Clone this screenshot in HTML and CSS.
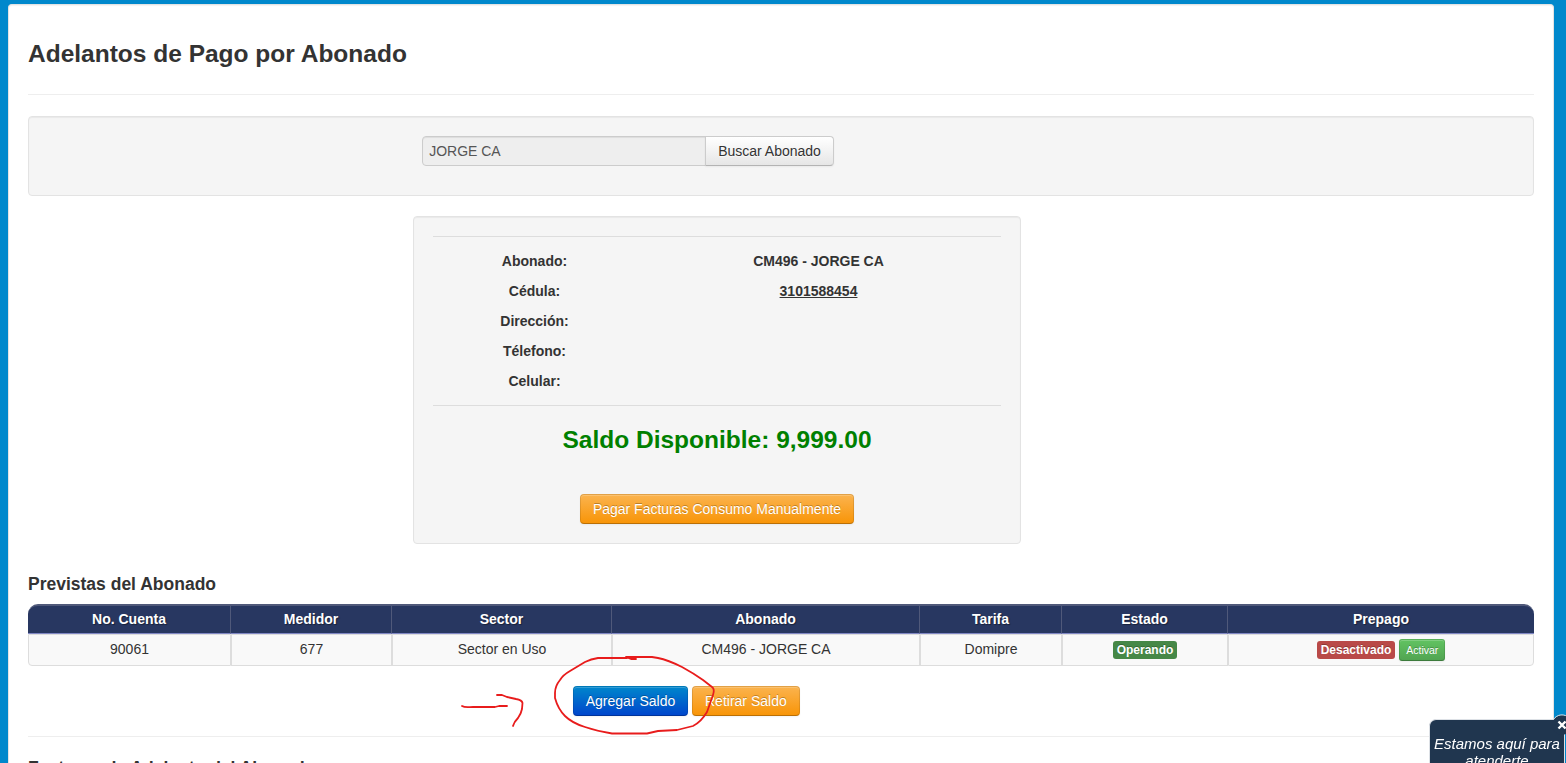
FILE: index.html
```html
<!DOCTYPE html>
<html lang="es">
<head>
    <meta charset="UTF-8">
    <meta name="viewport" content="width=device-width, initial-scale=1.0">
    <title>Adelantos de Pago por Abonado</title>
    <link rel="stylesheet" href="styles.css">
</head>
<body>
    <div class="page">
        <h3>Adelantos de Pago por Abonado</h3>
        <hr>

        <div class="well search">
            <input type="text" value="JORGE CA" readonly>
            <button class="btn btn-search">Buscar Abonado</button>
        </div>

        <div class="well account">
            <div class="details">
                <span>Abonado:</span><span>CM496 - JORGE CA</span>
                <span>Cédula:</span><span><u>3101588454</u></span>
                <span>Dirección:</span><span></span>
                <span>Télefono:</span><span></span>
                <span>Celular:</span><span></span>
            </div>
            <h3 class="balance">Saldo Disponible: 9,999.00</h3>
            <button class="btn btn-warning">Pagar Facturas Consumo Manualmente</button>
        </div>

        <h4 class="table-title">Previstas del Abonado</h4>
        <table class="table">
            <colgroup>
                <col class="col-account"><col class="col-meter"><col class="col-sector"><col class="col-name">
                <col class="col-rate"><col class="col-state"><col class="col-prepaid">
            </colgroup>
            <thead>
                <tr>
                    <th>No. Cuenta</th>
                    <th>Medidor</th>
                    <th>Sector</th>
                    <th>Abonado</th>
                    <th>Tarifa</th>
                    <th>Estado</th>
                    <th>Prepago</th>
                </tr>
            </thead>
            <tbody>
                <tr>
                    <td>90061</td>
                    <td>677</td>
                    <td>Sector en Uso</td>
                    <td>CM496 - JORGE CA</td>
                    <td>Domipre</td>
                    <td><span class="label label-success">Operando</span></td>
                    <td><span class="label label-important">Desactivado</span> <button class="btn btn-mini btn-success">Activar</button></td>
                </tr>
            </tbody>
        </table>

        <div class="actions">
            <button class="btn btn-primary">Agregar Saldo</button>
            <button class="btn btn-warning">Retirar Saldo</button>
            <svg class="marks" width="270" height="90" viewBox="0 0 270 90">
                <path d="M7 56 C10 58 14 57 18 57 L40 57 L44 56 L52 56"/>
                <path d="M42 45 L47 45 L52 47 L61 49 Q67 50 67.500 53 L67 59 Q66 64 63 68 Q59 72 58 76"/>
                <path d="M172 8 L143 8 Q136 9 130 12 L115 21 Q108 25 105 30 Q100 36 100 43 V48 Q103 59 110 66 Q117 73 130 77 Q142 81 157 83.500 H192 L203 81 L222 80 L238 76 Q246 72 252 62 L258 45 Q260 39 257 37 L248 30 Q238 23 227 17 Q213 10 203 8 L197 7 H171 L176 9 H181"/>
            </svg>
        </div>
        <hr>
        <h4>Facturas de Adelanto del Abonado</h4>
    </div>

    <div class="chat">
        <svg class="chat-close" width="22" height="22" viewBox="0 0 22 22">
            <circle cx="11" cy="11" r="10"/>
            <path class="ring" d="M2.500 5.500A10 10 0 1 1 16 19.500"/>
            <path class="cross" d="M7.500 7.500l7 7M14.500 7.500l-7 7"/>
        </svg>
        <p>Estamos aquí para atenderte</p>
    </div>
</body>
</html>
```
FILE: styles.css
```css
* {
    box-sizing: border-box;
}

body {
    margin: 0;
    height: 763px;
    padding: 4px 12px 0 8px;
    overflow: hidden;
    background: #0088cc;
    color: #333;
    font-family: "Liberation Sans", Arial, sans-serif;
    font-size: 14px;
    line-height: 20px;
}

.page {
    height: 759px;
    overflow: hidden;
    padding: 19px 19px 0;
    background: #fff;
    border: 1px solid #e3e3e3;
    border-bottom: 0;
    border-radius: 4px 4px 0 0;
    box-shadow: inset 0 1px 1px rgba(0,0,0,0.05);
}

h3 {
    margin: 10px 0;
    font-size: 24.5px;
    line-height: 40px;
}

h4 {
    margin: 10px 0;
    font-size: 17.5px;
    line-height: 20px;
}

hr {
    margin: 20px 0;
    border: 0;
    border-top: 1px solid #eee;
    border-bottom: 1px solid #fff;
}

.well {
    margin-bottom: 20px;
    padding: 19px;
    background: #f5f5f5;
    border: 1px solid #e3e3e3;
    border-radius: 4px;
    box-shadow: inset 0 1px 1px rgba(0,0,0,0.05);
}

.search {
    display: flex;
    justify-content: center;
    height: 80px;
    padding-right: 325px;
}

input {
    width: 284px;
    height: 30px;
    padding: 4px 6px;
    background: #eee;
    border: 1px solid #ccc;
    border-radius: 4px 0 0 4px;
    box-shadow: inset 0 1px 1px rgba(0,0,0,0.075);
    color: #555;
    font: 14px/20px "Liberation Sans", Arial, sans-serif;
}

.btn {
    height: 30px;
    padding: 4px 12px;
    border: 1px solid #ccc;
    border-color: rgba(0,0,0,0.1) rgba(0,0,0,0.1) rgba(0,0,0,0.25);
    border-radius: 4px;
    box-shadow: inset 0 1px 0 rgba(255,255,255,0.2), 0 1px 2px rgba(0,0,0,0.05);
    color: #fff;
    font: 14px/20px "Liberation Sans", Arial, sans-serif;
    text-shadow: 0 -1px 0 rgba(0,0,0,0.25);
    white-space: nowrap;
}

.btn-search {
    margin-left: -1px;
    background: linear-gradient(#fff, #e6e6e6);
    border-color: #ccc #ccc #b3b3b3;
    border-radius: 0 4px 4px 0;
    color: #333;
    text-shadow: 0 1px 1px rgba(255,255,255,0.75);
}

.btn-primary {
    width: 115px;
    padding: 4px 0;
    background: linear-gradient(#0088cc, #0044cc) border-box;
}

.btn-warning {
    background: linear-gradient(#fbb450, #f89406) border-box;
}

.btn-success {
    background: linear-gradient(#62c462, #51a351) border-box;
}

.btn-mini {
    height: 22px;
    padding: 0 6px;
    border-radius: 3px;
    font-size: 10.5px;
    vertical-align: middle;
}

.account {
    width: 608px;
    height: 328px;
    margin-left: 385px;
    text-align: center;
}

.details {
    display: grid;
    grid-template-columns: 203px 1fr;
    grid-auto-rows: 30px;
    height: 170px;
    padding-top: 9px;
    border-top: 1px solid #ddd;
    border-bottom: 1px solid #ddd;
    font-weight: bold;
    line-height: 30px;
}

.balance {
    margin: 14px 0 34px;
    color: green;
}

.table-title {
    margin-top: 30px;
}

.table {
    width: 100%;
    table-layout: fixed;
    border-collapse: separate;
    border-spacing: 0;
    text-align: center;
}

.col-account { width: 203px; }
.col-meter { width: 161px; }
.col-sector { width: 220px; }
.col-name { width: 308px; }
.col-rate { width: 142px; }
.col-state { width: 166px; }
.col-prepaid { width: 306px; }

th {
    height: 30px;
    padding: 3px 4px 4px;
    background: #283761;
    border-top: 2px solid #50597a;
    border-right: 1px solid #50597a;
    border-bottom: 1px solid #8087c4;
    color: #fff;
    text-shadow: 1px 1px 1px rgba(0,0,0,0.4);
}

th:first-child {
    border-top-left-radius: 10px;
}

th:last-child {
    border-right: 0;
    border-top-right-radius: 10px;
}

td {
    height: 32px;
    padding: 4px;
    background: #f9f9f9;
    border: 1px solid #ddd;
    vertical-align: top;
    line-height: 20px;
}

td:first-child {
    border-bottom-left-radius: 4px;
}

td:last-child {
    border-bottom-right-radius: 4px;
}

.label {
    display: inline-block;
    height: 18px;
    padding: 2px 4px;
    border-radius: 3px;
    color: #fff;
    font-size: 12px;
    font-weight: bold;
    line-height: 14px;
    text-shadow: 0 -1px 0 rgba(0,0,0,0.25);
    vertical-align: middle;
}

.label-success {
    background: #468847;
}

.label-important {
    background: #b94a48;
}

.actions {
    position: relative;
    display: flex;
    gap: 4px;
    margin: 20px 0;
    padding-left: 545px;
}

/* hand-drawn arrow and circle over the buttons */
.marks {
    position: absolute;
    top: -36px;
    left: 427px;
    fill: none;
    stroke: #e81c1c;
    stroke-width: 1.8;
    stroke-linecap: round;
    stroke-linejoin: round;
    pointer-events: none;
}

.chat {
    position: fixed;
    top: 719px;
    left: 1429px;
    width: 136px;
    height: 44px;
    padding: 15px 2px 0;
    background: #20364f;
    border: 1px solid #dde1e6;
    border-bottom: 0;
    border-radius: 7px 7px 0 0;
    color: #fff;
    font-size: 15px;
    font-style: italic;
    line-height: 17px;
    text-align: center;
}

.chat p {
    margin: 0;
}

.chat-close {
    position: absolute;
    top: -6px;
    right: -9px;
    fill: #20364f;
}

.chat-close .ring {
    fill: none;
    stroke: #dde1e6;
}

.chat-close .cross {
    stroke: #fff;
    stroke-width: 2.4;
}
```
